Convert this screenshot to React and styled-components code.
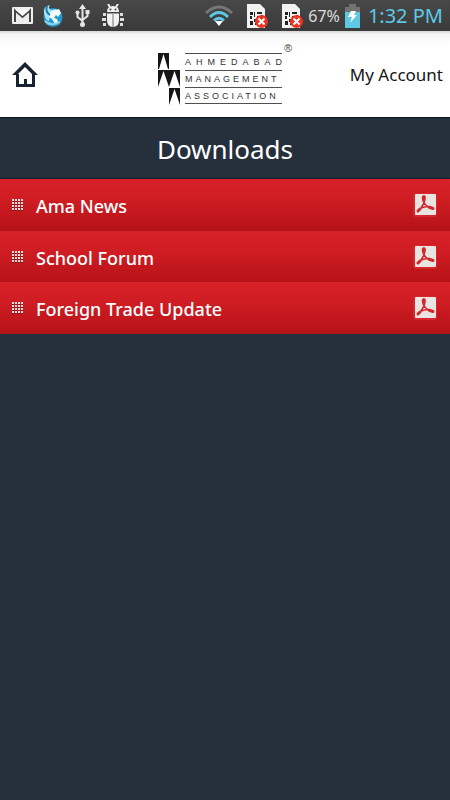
import React from "react";
import styled, { createGlobalStyle } from "styled-components";

const GlobalStyle = createGlobalStyle`
  * { box-sizing: border-box; }
  body {
    margin: 0;
    background: #26303c;
    font-family: "Noto Sans", "Open Sans", sans-serif;
  }
  svg { display: block; flex: none; }
`;

const Screen = styled.div`
  min-height: 100vh;
  background: #26303c;
`;

const StatusBar = styled.div`
  display: flex;
  align-items: center;
  justify-content: space-between;
  height: 31px;
  padding: 0 7px 0 12px;
  background: linear-gradient(#484848, #3a3a3a);
`;

const IconGroup = styled.div`
  display: flex;
  align-items: center;
  gap: ${(p) => p.$gap}px;
`;

const Percent = styled.span`
  color: #dcdcdc;
  font-size: 16px;
  line-height: 24px;
`;

const Clock = styled.time`
  margin-left: 3px;
  color: #5cc8e6;
  font-size: 20px;
  line-height: 28px;
`;

const Header = styled.header`
  display: grid;
  grid-template-columns: 1fr auto 1fr;
  align-items: center;
  height: 87px;
  padding: 0 7px 0 12px;
  border-bottom: 1px solid #0c1422;
  background: linear-gradient(#d4d4d4, #f4f4f4 3px, #ffffff 14px);
`;

const HomeLink = styled.a`
  justify-self: start;
`;

const AccountLink = styled.a`
  justify-self: end;
  padding-top: 2px;
  color: #161616;
  font-size: 17px;
  line-height: 24px;
  text-decoration: none;
`;

const Title = styled.h1`
  margin: 0;
  padding: 13px 0 10px;
  border-bottom: 1px solid #14202e;
  color: #ffffff;
  font-size: 26px;
  font-weight: 400;
  line-height: 37px;
  text-align: center;
`;

const List = styled.ul`
  margin: 0;
  padding: 0;
  list-style: none;
`;

const Row = styled.a`
  display: flex;
  align-items: center;
  gap: 12px;
  min-height: 52px;
  margin-bottom: ${(p) => (p.$tight ? "-1px" : "0")};
  padding: 0 13px 0 12px;
  border-bottom: 1px solid #a5171c;
  background: linear-gradient(#d82128, #cf1d23 40%, #b61218);
  color: #ffffff;
  font-size: 18px;
  font-weight: 500;
  line-height: 26px;
  text-decoration: none;
`;

const RowLabel = styled.span`
  flex: 1;
  padding-top: 2px;
`;

const MailIcon = () => (
  <svg width="21" height="17" viewBox="0 0 21 17" aria-hidden="true">
    <rect width="21" height="17" rx="1" fill="#eeeeee" />
    <path d="M3 15V3.500L10.500 10 18 3.500V15" fill="none" stroke="#484848" strokeWidth="2" />
    <path d="M3 2.500h15L10.500 9z" fill="#fafafa" />
  </svg>
);

const GlobeIcon = () => (
  <svg width="20" height="24" viewBox="0 0 20 24" aria-hidden="true">
    <circle cx="10" cy="13.500" r="9.500" fill="#2298c8" />
    <path d="M1 9 Q0 2 7 1 Q4 5 9 6 L13 5 Q15 8 11 10 L7 12 6 17 Q2 16 1 9Z" fill="#a9e2f5" />
    <path d="M9 7l7-2 2 4-3 4-2-2-2 3 3 1 1 3-3 2-3-5-3-2 1-4z" fill="#f4fbff" />
    <path d="M4 2Q2 8 7 11" fill="none" stroke="#1682b4" strokeWidth="2" />
    <path d="M2 17Q8 23 17 18" fill="none" stroke="#8bd6f0" strokeWidth="2" />
  </svg>
);

const UsbIcon = () => (
  <svg width="19" height="23" viewBox="0 0 19 23" aria-hidden="true">
    <g fill="none" stroke="#e6e6e6" strokeWidth="2">
      <path d="M9.500 3V20M4.500 9v4l5 4M14.500 8v4l-5 4" />
    </g>
    <g fill="#e6e6e6">
      <path d="M9.500 0 13 5H6z" />
      <circle cx="9.500" cy="20.500" r="2.500" />
      <circle cx="4.500" cy="8.500" r="2" />
      <rect x="12.500" y="6" width="4" height="4" />
    </g>
  </svg>
);

const BugIcon = () => (
  <svg width="22" height="23" viewBox="0 0 22 23" aria-hidden="true">
    <path d="M6 0l2 3M16 0l-2 3" stroke="#eeeeee" strokeWidth="2" />
    <path d="M1 9h3v3H1zM0 14h4v3H0zM1 19h3v3H1zM18 9h3v3h-3zM18 14h4v3h-4zM18 19h3v3h-3z" fill="#dddddd" />
    <path d="M5 8Q5 2 11 2T17 8Z" fill="#f2f2f2" />
    <path d="M5 9.500H17V16Q17 23 11 23T5 16Z" fill="#f2f2f2" />
    <circle cx="8.500" cy="5.500" r="1" fill="#444" />
    <circle cx="13.500" cy="5.500" r="1" fill="#444" />
    <path d="M11 10v13" stroke="#777" />
  </svg>
);

const WifiIcon = () => (
  <svg width="28" height="22" viewBox="0 0 28 22" aria-hidden="true">
    <g fill="none" strokeWidth="3">
      <path d="M1 8Q14-4 27 8" stroke="#777777" />
      <path d="M5 12Q14 3 23 12" stroke="#5cc8e6" />
      <path d="M9 15.500Q14 11 19 15.500" stroke="#5cc8e6" />
    </g>
    <path d="M10 16h8l-4 5z" fill="#ffffff" />
  </svg>
);

const SimIcon = () => (
  <svg width="22" height="24" viewBox="0 0 22 24" aria-hidden="true">
    <path d="M1 0H14L19 5V24H1Z" fill="#f2f2f2" />
    <path
      d="M4 8h3v3H4zM8 8h1v5H8zM11 8h5v2h-5zM4 12h2v3H4zM11 12h2v3h-2zM15 11h2v3h-2zM4 17h3v4H4zM8 15h2v3H8zM9 19h2v2H9z"
      fill="#222222"
    />
    <circle cx="15.500" cy="17.500" r="6.500" fill="#f03220" />
    <path d="M12.500 14.500l6 6M18.500 14.500l-6 6" stroke="#ffffff" strokeWidth="2" />
  </svg>
);

const BatteryIcon = () => (
  <svg width="15" height="24" viewBox="0 0 15 24" aria-hidden="true">
    <path d="M4 0h7v3h4v6H0V3h4z" fill="#727272" />
    <path d="M0 8h15v16H0z" fill="#5cc8e6" />
    <path d="M6 7h5l-2 4h3L5 19l2-6H3z" fill="#ffffff" />
  </svg>
);

const HomeIcon = () => (
  <svg width="26" height="25" viewBox="0 0 26 25" aria-hidden="true">
    <path d="M5.500 12V23.500H21.500V12" fill="none" stroke="#17232f" strokeWidth="3" />
    <path d="M13 0L26 13H21L13 5 5 13H0Z" fill="#17232f" />
    <path d="M12 17h3v6h-3z" fill="#17232f" />
  </svg>
);

const LOGO_LINES = [
  { text: "AHMEDABAD", y: 22, tracking: 5 },
  { text: "MANAGEMENT", y: 39, tracking: 3 },
  { text: "ASSOCIATION", y: 56, tracking: 3 },
];

const LogoText = styled.text`
  fill: #333333;
  font-family: "Liberation Sans", sans-serif;
  font-size: 9px;
  letter-spacing: ${(p) => p.$tracking}px;
`;

const Registered = styled.text`
  fill: #444444;
  font-family: "Liberation Sans", sans-serif;
  font-size: 11px;
`;

const Logo = () => (
  <svg width="142" height="63" viewBox="0 0 142 63" role="img" aria-label="Ahmedabad Management Association">
    <g fill="#151515">
      <rect x="1" y="10" width="11" height="16" />
      <rect x="1" y="27" width="22" height="17" />
      <rect x="12" y="45" width="11" height="17" />
    </g>
    <g fill="#ffffff">
      <path d="M2 26L6.500 11 11 26Z" />
      <path d="M1 44L6.500 28 12 44ZM12 44L17.500 28 23 44Z" />
      <path d="M12 62L17.500 46 23 62Z" />
    </g>
    <path d="M28 10.500H125M28 27.500H125M28 44.500H125M28 60.500H125" stroke="#505050" />
    {LOGO_LINES.map((line) => (
      <LogoText key={line.text} x="28" y={line.y} $tracking={line.tracking}>
        {line.text}
      </LogoText>
    ))}
    <Registered x="127" y="9">®</Registered>
  </svg>
);

const GripIcon = () => (
  <svg width="12" height="12" viewBox="0 0 12 12" aria-hidden="true">
    {[0, 3, 6, 9].map((y) =>
      [0, 3, 6, 9].map((x) => (
        <g key={`${x}-${y}`}>
          <rect x={x} y={y + 1} width="2" height="2" fill="#811318" />
          <rect x={x} y={y} width="2" height="2" fill="#f3dcdc" />
        </g>
      ))
    )}
  </svg>
);

const PdfIcon = () => (
  <svg width="24" height="25" viewBox="0 0 24 25" aria-hidden="true">
    <rect y="1" width="24" height="24" rx="3" fill="#d7252b" />
    <rect x="2" y="2" width="21" height="21" rx="1" fill="#e8e4e2" />
    <g fill="none" stroke="#d3262a" strokeLinecap="round" strokeLinejoin="round">
      <path d="M10 9L9.500 6Q9.500 4 11 4T12 7L11 11 8 16M10 9Q12 13 16 16M8 16Q12 14 17 14.500" strokeWidth="1.500" />
      <path d="M10.500 5V7M7 17L5 19M17 15.500L20 16.500" strokeWidth="3" />
    </g>
  </svg>
);

const DOWNLOADS = ["Ama News", "School Forum", "Foreign Trade Update"];

export default function App() {
  return (
    <Screen>
      <GlobalStyle />
      <StatusBar>
        <IconGroup $gap={10}>
          <MailIcon />
          <GlobeIcon />
          <UsbIcon />
          <BugIcon />
        </IconGroup>
        <IconGroup $gap={5}>
          <IconGroup $gap={13}>
            <WifiIcon />
            <SimIcon />
            <SimIcon />
          </IconGroup>
          <Percent>67%</Percent>
          <BatteryIcon />
          <Clock dateTime="13:32">1:32 PM</Clock>
        </IconGroup>
      </StatusBar>
      <Header>
        <HomeLink href="#home" aria-label="Home">
          <HomeIcon />
        </HomeLink>
        <Logo />
        <AccountLink href="#account">My Account</AccountLink>
      </Header>
      <main>
        <Title>Downloads</Title>
        <List>
          {DOWNLOADS.map((name, i) => (
            <li key={name}>
              <Row href="#download" $tight={i === 1}>
                <GripIcon />
                <RowLabel>{name}</RowLabel>
                <PdfIcon />
              </Row>
            </li>
          ))}
        </List>
      </main>
    </Screen>
  );
}
